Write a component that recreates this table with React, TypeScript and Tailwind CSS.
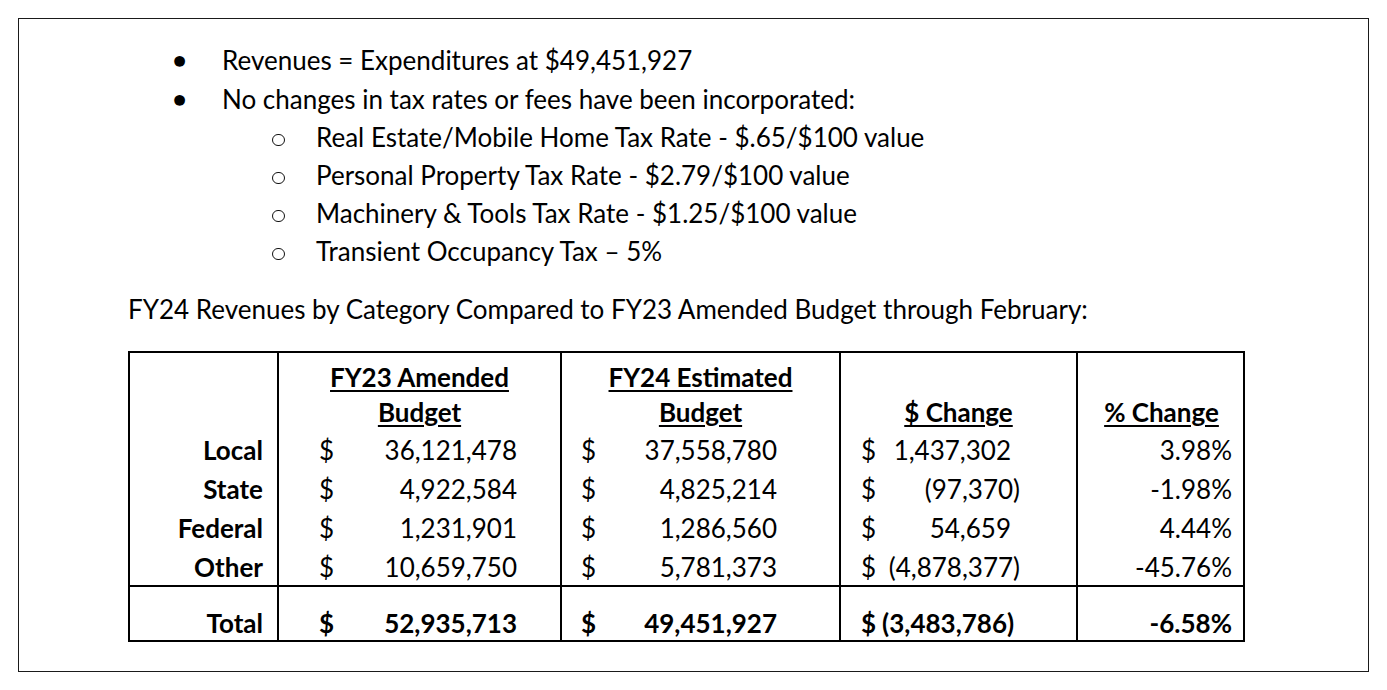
import React from 'react';

const font = { fontFamily: 'Lato, "Noto Sans", sans-serif' };

type Row = { label: string; a: string; b: string; c: string; cNeg: boolean; pct: string };

const rows: Row[] = [
  { label: 'Local', a: '36,121,478', b: '37,558,780', c: '1,437,302', cNeg: false, pct: '3.98%' },
  { label: 'State', a: '4,922,584', b: '4,825,214', c: '(97,370)', cNeg: true, pct: '-1.98%' },
  { label: 'Federal', a: '1,231,901', b: '1,286,560', c: '54,659', cNeg: false, pct: '4.44%' },
  { label: 'Other', a: '10,659,750', b: '5,781,373', c: '(4,878,377)', cNeg: true, pct: '-45.76%' },
];

const cols = 'grid grid-cols-[149px_283px_279px_237px_167px]';

const Money: React.FC<{ value: string; dollarPad: string; right: string; neg?: boolean; hang?: boolean }> = ({ value, dollarPad, right, neg, hang }) => (
  <div className={`flex items-center justify-between h-full ${dollarPad} ${right}`}>
    <span>$</span>
    <span className={hang && !neg ? 'pr-[9px]' : ''}>{value}</span>
  </div>
);

const App: React.FC = () => {
  return (
    <div className="w-[1387px] h-[690px] bg-white pt-[18px] pl-[18px] text-black" style={font}>
      <div className="w-[1351px] h-[654px] border-[1.5px] border-[#1a1a1a]">
        {/* Bullets */}
        <div className="pt-[21px] text-[26px] leading-[38px]">
          <div className="flex items-center h-[40px]">
            <span className="w-[203px] pl-[154px] text-[22px]">●</span>
            <span>Revenues = Expenditures at $49,451,927</span>
          </div>
          <div className="flex items-center h-[38px]">
            <span className="w-[203px] pl-[154px] text-[22px]">●</span>
            <span>No changes in tax rates or fees have been incorporated:</span>
          </div>
          {[
            'Real Estate/Mobile Home Tax Rate - $.65/$100 value',
            'Personal Property Tax Rate - $2.79/$100 value',
            'Machinery & Tools Tax Rate - $1.25/$100 value',
            'Transient Occupancy Tax – 5%',
          ].map((t) => (
            <div key={t} className="flex items-center h-[38px]">
              <span className="w-[297px] pl-[253px] flex items-center pt-[5px]">
                <span className="inline-block w-[13px] h-[12px] rounded-full border-[1.5px] border-[#111]" />
              </span>
              <span>{t}</span>
            </div>
          ))}
        </div>

        <div className="pl-[109px] mt-[20px] text-[26px] leading-[38px]">
          FY24 Revenues by Category Compared to FY23 Amended Budget through February:
        </div>

        {/* Table */}
        <div className="ml-[109px] mt-[23px] w-[1117px] border-2 border-black text-[26px]">
          <div className={`${cols} h-[78px] font-bold`}>
            <div className="border-r-2 border-black" />
            <div className="border-r-2 border-black flex flex-col items-center justify-end leading-[35px] pb-[1px]">
              <span className="underline underline-offset-[3px]">FY23 Amended</span>
              <span className="underline underline-offset-[3px]">Budget</span>
            </div>
            <div className="border-r-2 border-black flex flex-col items-center justify-end leading-[35px] pb-[1px]">
              <span className="underline underline-offset-[3px]">FY24 Estimated</span>
              <span className="underline underline-offset-[3px]">Budget</span>
            </div>
            <div className="border-r-2 border-black flex flex-col items-center justify-end leading-[35px] pb-[1px]">
              <span className="underline underline-offset-[3px]">$ Change</span>
            </div>
            <div className="flex flex-col items-center justify-end leading-[35px] pb-[1px]">
              <span className="underline underline-offset-[3px]">% Change</span>
            </div>
          </div>
          {rows.map((r, i) => (
            <div key={r.label} className={`${cols} ${i === 3 ? 'h-[37px]' : 'h-[39px]'} items-center`}>
              <div className="border-r-2 border-black h-full flex items-center justify-end pr-[14px] font-bold">{r.label}</div>
              <div className="border-r-2 border-black h-full">
                <Money value={r.a} dollarPad="pl-[40px]" right="pr-[43px]" />
              </div>
              <div className="border-r-2 border-black h-full">
                <Money value={r.b} dollarPad="pl-[19px]" right="pr-[62px]" />
              </div>
              <div className="border-r-2 border-black h-full">
                <Money value={r.c} dollarPad="pl-[20px]" right="pr-[56px]" neg={r.cNeg} hang />
              </div>
              <div className="h-full flex items-center justify-end pr-[13px]">{r.pct}</div>
            </div>
          ))}
          <div className={`${cols} h-[55px] border-t-2 border-black font-bold leading-[38px]`}>
            <div className="border-r-2 border-black h-full pt-[17px] text-right pr-[14px]">Total</div>
            <div className="border-r-2 border-black h-full pt-[17px] flex justify-between pl-[40px] pr-[43px]">
              <span>$</span>
              <span>52,935,713</span>
            </div>
            <div className="border-r-2 border-black h-full pt-[17px] flex justify-between pl-[19px] pr-[62px]">
              <span>$</span>
              <span>49,451,927</span>
            </div>
            <div className="border-r-2 border-black h-full pt-[17px] flex pl-[20px] gap-[6px]">
              <span>$</span>
              <span>(3,483,786)</span>
            </div>
            <div className="h-full pt-[17px] text-right pr-[13px]">-6.58%</div>
          </div>
        </div>
      </div>
    </div>
  );
};

export default App;
